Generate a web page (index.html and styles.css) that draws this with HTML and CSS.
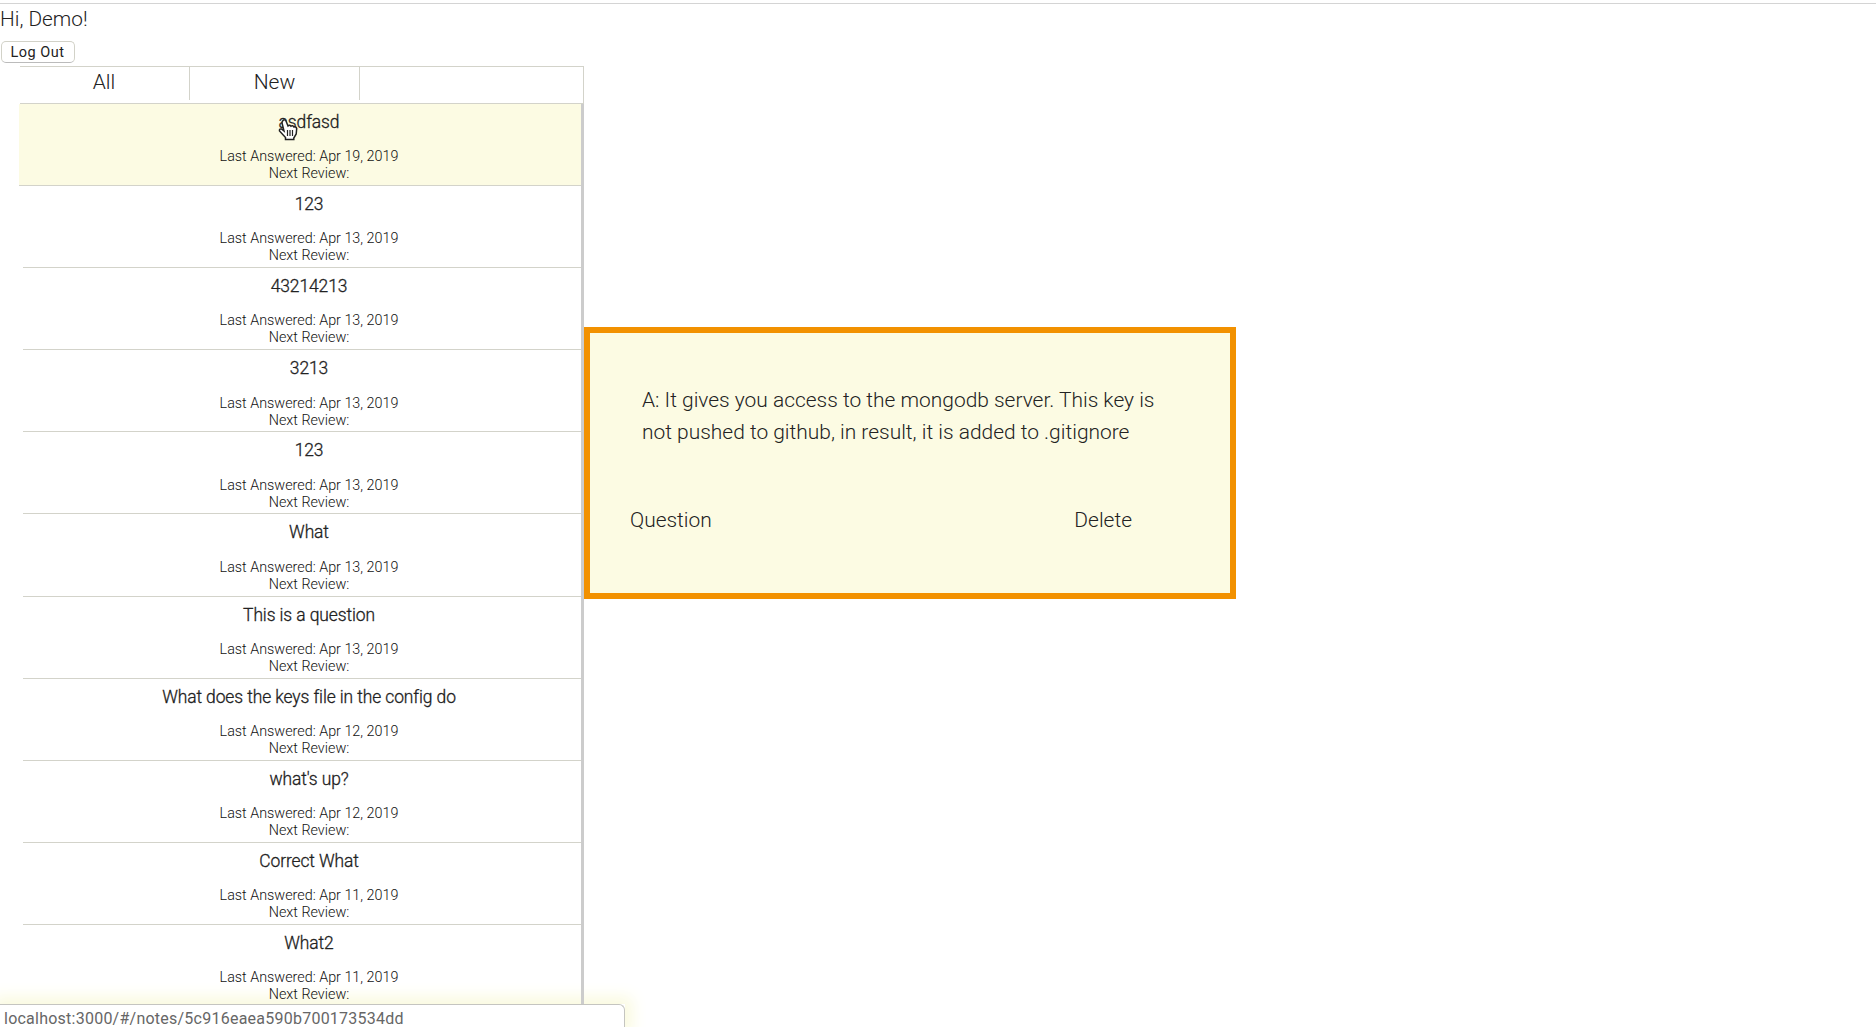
FILE: index.html
```
<!DOCTYPE html>
<html lang="en"><head><meta charset="utf-8"><title>Notes</title><link rel="stylesheet" href="styles.css"></head>
<body>
<header class="top"><p class="hello">Hi, Demo!</p><button class="logout">Log Out</button></header>
<main class="main">
<section class="side">
<nav class="tabs"><a class="tab">All</a><a class="tab">New</a></nav>
<ul class="list">
<li class="note active"><h3>asdfasd</h3><p>Last Answered: Apr 19, 2019</p><p>Next Review:</p></li>
<li class="note"><h3>123</h3><p>Last Answered: Apr 13, 2019</p><p>Next Review:</p></li>
<li class="note"><h3>43214213</h3><p>Last Answered: Apr 13, 2019</p><p>Next Review:</p></li>
<li class="note"><h3>3213</h3><p>Last Answered: Apr 13, 2019</p><p>Next Review:</p></li>
<li class="note"><h3>123</h3><p>Last Answered: Apr 13, 2019</p><p>Next Review:</p></li>
<li class="note"><h3>What</h3><p>Last Answered: Apr 13, 2019</p><p>Next Review:</p></li>
<li class="note"><h3>This is a question</h3><p>Last Answered: Apr 13, 2019</p><p>Next Review:</p></li>
<li class="note"><h3>What does the keys file in the config do</h3><p>Last Answered: Apr 12, 2019</p><p>Next Review:</p></li>
<li class="note"><h3>what's up?</h3><p>Last Answered: Apr 12, 2019</p><p>Next Review:</p></li>
<li class="note"><h3>Correct What</h3><p>Last Answered: Apr 11, 2019</p><p>Next Review:</p></li>
<li class="note"><h3>What2</h3><p>Last Answered: Apr 11, 2019</p><p>Next Review:</p></li>
</ul>
</section>
<article class="card">
<p class="answer">A: It gives you access to the mongodb server. This key is<br>not pushed to github, in result, it is added to .gitignore</p>
<div class="actions"><a>Question</a><a>Delete</a></div>
</article>
</main>
<svg class="cursor" viewBox="0 0 20 24" width="20" height="24"><path d="M5 2.500Q6.500 1 8 3L10 8Q11.500 6.500 13 8.200Q14.500 7 16 9Q18 8.200 18.700 10.500L18.200 16L15.800 20V21.500H7.500V19.500L1.500 13Q1 10.500 3.500 11L6 13L4 5Q4 3.500 5 2.500Z" fill="#fff" stroke="#222" stroke-width="1.500"/><path d="M9.500 12V18M12 12V18M14.500 12V18" stroke="#222" stroke-width="1.200"/></svg>
<div class="glow"></div>
<div class="status">localhost:3000/#/notes/5c916eaea590b700173534dd</div>
</body></html>
```
FILE: styles.css
```
* { box-sizing: border-box; margin: 0; padding: 0; }
body { height: 1027px; overflow: hidden; background: #fff; color: #222; font-family: Roboto, sans-serif; position: relative; }
.top { margin-top: 3px; border-top: 1px solid #d4d4d4; height: 63px; }
.hello { font-size: 20.8px; font-weight: 300; line-height: 30px; height: 37px; }
.logout { display: block; margin-left: 1px; width: 74px; height: 22px; padding-right: 1px; border: 1px solid #d2d2c8; border-bottom-color: #bbb; border-radius: 5px; background: #fff; font: 400 14.5px/19px Roboto, sans-serif; color: #222; letter-spacing: .5px; }
.main { display: flex; align-items: flex-start; height: 961px; position: relative; z-index: 1; }
.side { width: 565px; margin-left: 19px; }
.tabs { display: flex; height: 38px; margin-left: 1px; border: 1px solid #d3d3ca; border-left: 0; }
.tab { width: 170px; height: 33px; border-right: 1px solid #d3d3ca; text-align: center; font-size: 21px; font-weight: 300; line-height: 31px; }
.tab:first-child { padding-right: 1px; }
.list { list-style: none; border-right: 3px solid #ccc; }
.note { height: 82.1px; padding-top: 6px; border-bottom: 1px solid #d3d3ca; margin-left: 4px; text-align: center; }
.note h3 { font-size: 17.45px; font-weight: 300; -webkit-text-stroke: .3px #222; letter-spacing: -.1px; line-height: 24.4px; height: 38.3px; margin-left: 14px; }
.note p { font-size: 14.35px; font-weight: 300; line-height: 17px; margin-left: 14px; color: #111; }
.active { margin-left: 0; padding-left: 4px; background: #fcfbe3; }
.card { width: 652px; height: 272px; margin-top: 261px; border: 6px solid #f29100; background: #fcfbe3; padding: 52px 40px 0; font-size: 20.95px; font-weight: 300; line-height: 31.5px; }
.answer { margin-left: 12px; white-space: nowrap; }
.actions { display: flex; justify-content: space-between; margin-top: 57px; padding-right: 58px; }
.cursor { position: absolute; left: 278px; top: 118px; z-index: 3; }
.glow { position: absolute; left: 0; top: 1004px; width: 625px; height: 24px; box-shadow: 0 0 16px 7px #fafade; }
.status { position: absolute; z-index: 2; left: 0; top: 1004px; width: 625px; height: 24px; padding-left: 4px; background: #fff; border: 1px solid #c5c5c0; border-left: 0; border-bottom: 0; border-radius: 0 6px 0 0; color: #666; font-size: 16px; line-height: 28px; letter-spacing: .24px; }
```
